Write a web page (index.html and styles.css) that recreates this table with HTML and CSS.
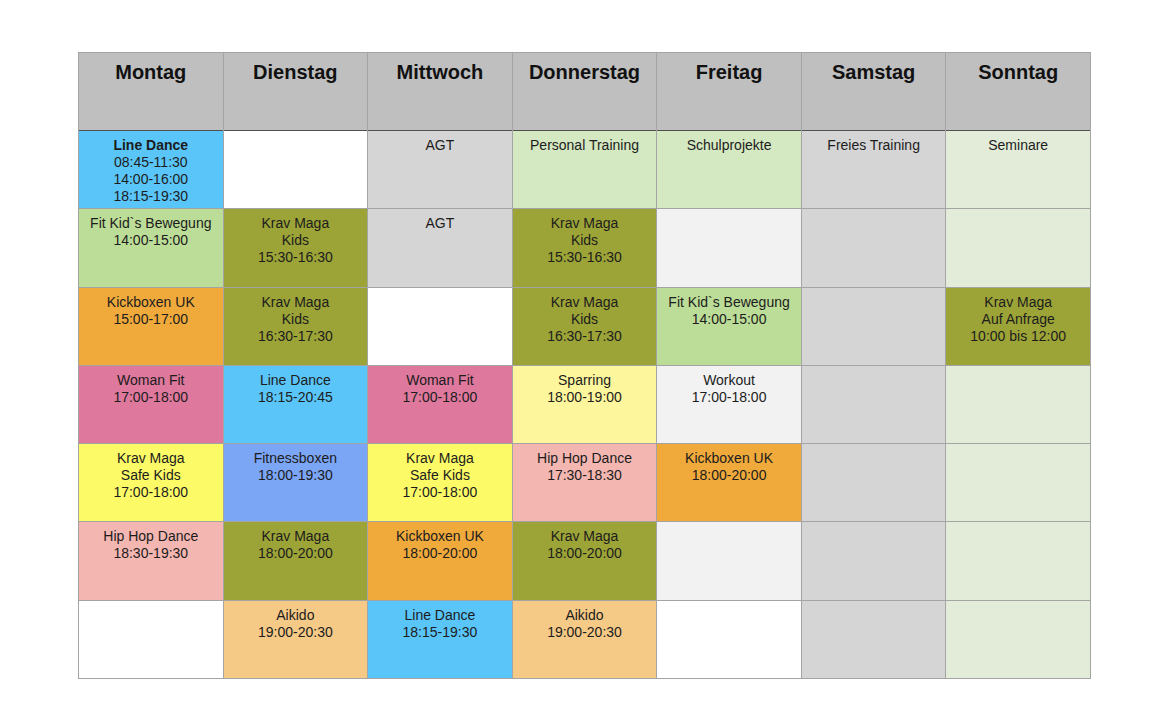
FILE: index.html
```html
<!DOCTYPE html>
<html lang="de">
<head>
<meta charset="utf-8">
<title>Stundenplan</title>
<link rel="stylesheet" href="styles.css">
</head>
<body>
<div class="plan">
  <div class="head">Montag</div>
  <div class="head">Dienstag</div>
  <div class="head">Mittwoch</div>
  <div class="head">Donnerstag</div>
  <div class="head">Freitag</div>
  <div class="head">Samstag</div>
  <div class="head">Sonntag</div>

  <div class="cell blue"><b>Line Dance</b><br>08:45-11:30<br>14:00-16:00<br>18:15-19:30</div>
  <div class="cell white"></div>
  <div class="cell gray">AGT</div>
  <div class="cell pale">Personal Training</div>
  <div class="cell pale">Schulprojekte</div>
  <div class="cell gray">Freies Training</div>
  <div class="cell mint">Seminare</div>

  <div class="cell green">Fit Kid`s Bewegung<br>14:00-15:00</div>
  <div class="cell olive">Krav Maga<br>Kids<br>15:30-16:30</div>
  <div class="cell gray">AGT</div>
  <div class="cell olive">Krav Maga<br>Kids<br>15:30-16:30</div>
  <div class="cell light"></div>
  <div class="cell gray"></div>
  <div class="cell mint"></div>

  <div class="cell orange">Kickboxen UK<br>15:00-17:00</div>
  <div class="cell olive">Krav Maga<br>Kids<br>16:30-17:30</div>
  <div class="cell white"></div>
  <div class="cell olive">Krav Maga<br>Kids<br>16:30-17:30</div>
  <div class="cell green">Fit Kid`s Bewegung<br>14:00-15:00</div>
  <div class="cell gray"></div>
  <div class="cell olive">Krav Maga<br>Auf Anfrage<br>10:00 bis 12:00</div>

  <div class="cell pink">Woman Fit<br>17:00-18:00</div>
  <div class="cell blue">Line Dance<br>18:15-20:45</div>
  <div class="cell pink">Woman Fit<br>17:00-18:00</div>
  <div class="cell cream">Sparring<br>18:00-19:00</div>
  <div class="cell light">Workout<br>17:00-18:00</div>
  <div class="cell gray"></div>
  <div class="cell mint"></div>

  <div class="cell yellow">Krav Maga<br>Safe Kids<br>17:00-18:00</div>
  <div class="cell violet">Fitnessboxen<br>18:00-19:30</div>
  <div class="cell yellow">Krav Maga<br>Safe Kids<br>17:00-18:00</div>
  <div class="cell rose">Hip Hop Dance<br>17:30-18:30</div>
  <div class="cell orange">Kickboxen UK<br>18:00-20:00</div>
  <div class="cell gray"></div>
  <div class="cell mint"></div>

  <div class="cell rose">Hip Hop Dance<br>18:30-19:30</div>
  <div class="cell olive">Krav Maga<br>18:00-20:00</div>
  <div class="cell orange">Kickboxen UK<br>18:00-20:00</div>
  <div class="cell olive">Krav Maga<br>18:00-20:00</div>
  <div class="cell light"></div>
  <div class="cell gray"></div>
  <div class="cell mint"></div>

  <div class="cell white"></div>
  <div class="cell peach">Aikido<br>19:00-20:30</div>
  <div class="cell blue">Line Dance<br>18:15-19:30</div>
  <div class="cell peach">Aikido<br>19:00-20:30</div>
  <div class="cell white"></div>
  <div class="cell gray"></div>
  <div class="cell mint"></div>
</div>
</body>
</html>
```

FILE: styles.css
```css
html, body {
  margin: 0;
  padding: 0;
  background: #ffffff;
}

body {
  font-family: "Liberation Sans", Arial, sans-serif;
  color: #1c1c1c;
}

.plan {
  margin: 52px 0 0 78px;
  width: 1011px;
  height: 625px;
  padding: 1px;
  display: grid;
  grid-template-columns: repeat(7, 1fr);
  grid-template-rows: 77px repeat(7, 1fr);
  gap: 1px;
  background: #a4a4a4;
}

.head {
  background: #bfbfbf;
  text-align: center;
  font-weight: bold;
  font-size: 20px;
  line-height: 22px;
  padding-top: 8px;
  color: #111;
  box-shadow: 0 1px 0 #505050;
}

.cell {
  text-align: center;
  font-size: 14px;
  line-height: 17px;
  padding-top: 6px;
}

.cell b { font-weight: bold; }

.white  { background: #ffffff; }
.light  { background: #f2f2f2; }
.gray   { background: #d5d5d5; }
.pale   { background: #d4e8c1; }
.mint   { background: #e2ecd8; }
.green  { background: #bcdd97; }
.blue   { background: #5ac5f8; }
.olive  { background: #9ca437; }
.orange { background: #f0aa3c; }
.pink   { background: #de789d; }
.cream  { background: #fdf69c; }
.yellow { background: #fcfa67; }
.violet { background: #7ba5f5; }
.rose   { background: #f4b6b0; }
.peach  { background: #f5c986; }
```
